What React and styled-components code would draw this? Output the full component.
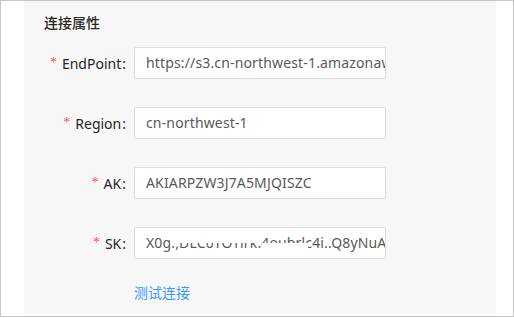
import React from "react";
import styled, { createGlobalStyle } from "styled-components";

const Global = createGlobalStyle`
  html, body { margin: 0; padding: 0; background: #fff; }
  body { font-family: "Noto Sans", "Noto Sans CJK SC", sans-serif; }
  * { box-sizing: border-box; }
`;

const Frame = styled.div`
  width: 514px;
  height: 317px;
  border: 1px solid #c6c6c6;
  background: #fff;
  padding: 0 17px 3px 23px;
  display: flex;
`;

const Panel = styled.div`
  flex: 1;
  background: #f7f7f7;
  padding: 10px 0 0 20px;
  display: flex;
  flex-direction: column;
`;

const Title = styled.div`
  font-family: "Noto Sans CJK SC", sans-serif;
  font-size: 14px;
  line-height: 22px;
  font-weight: 500;
  color: #262626;
  margin-bottom: 14px;
`;

const Form = styled.div`
  display: grid;
  grid-template-columns: 90px 252px;
  row-gap: 28px;
  margin-left: -20px;
  padding-left: 20px;
`;

const Label = styled.label`
  display: flex;
  align-items: center;
  justify-content: flex-end;
  height: 32px;
  font-size: 14px;
  color: #262626;
  white-space: nowrap;
  margin-right: 8px;
  &::before {
    content: "*";
    color: #ff4d4f;
    font-family: "Liberation Serif", serif;
    font-size: 14px;
    margin-right: 5px;
    line-height: 1;
  }
  &::after {
    content: ":";
    margin-left: 1px;
  }
`;

const InputWrap = styled.div`
  position: relative;
  height: 32px;
`;

const Input = styled.div`
  height: 32px;
  width: 252px;
  border: 1px solid #dcdcdc;
  border-radius: 2px;
  background: #fff;
  padding: 0 11px;
  font-size: 14px;
  line-height: 30px;
  letter-spacing: 0.15px;
  color: #595959;
  white-space: nowrap;
  overflow: hidden;
`;

const Mask = styled.div`
  position: absolute;
  background: #fff;
`;

const LinkRow = styled.div`
  grid-column: 2;
  margin-top: -6px;
`;

const Link = styled.a`
  font-size: 14px;
  line-height: 22px;
  color: #3a9bff;
  text-decoration: none;
  font-family: "Noto Sans CJK SC", sans-serif;
`;

const fields = [
  { label: "EndPoint", value: "https://s3.cn-northwest-1.amazonaws.com.cn" },
  { label: "Region", value: "cn-northwest-1" },
  { label: "AK", value: "AKIARPZW3J7A5MJQISZC" },
  { label: "SK", value: "X0g.,DLC0TOTirk.4oubrlc4i..Q8yNuA7kx", masked: true },
];

export default function App() {
  return (
    <>
      <Global />
      <Frame>
        <Panel>
          <Title>连接属性</Title>
          <Form>
            {fields.map((f) => (
              <React.Fragment key={f.label}>
                <Label>{f.label}</Label>
                <InputWrap>
                  <Input>{f.value}</Input>
                  {f.masked && (
                    <>
                      <Mask style={{ left: 36, top: 6, width: 92, height: 10 }} />
                      <Mask style={{ left: 128, top: 16, width: 46, height: 10 }} />
                    </>
                  )}
                </InputWrap>
              </React.Fragment>
            ))}
            <LinkRow>
              <Link href="#">测试连接</Link>
            </LinkRow>
          </Form>
        </Panel>
      </Frame>
    </>
  );
}
